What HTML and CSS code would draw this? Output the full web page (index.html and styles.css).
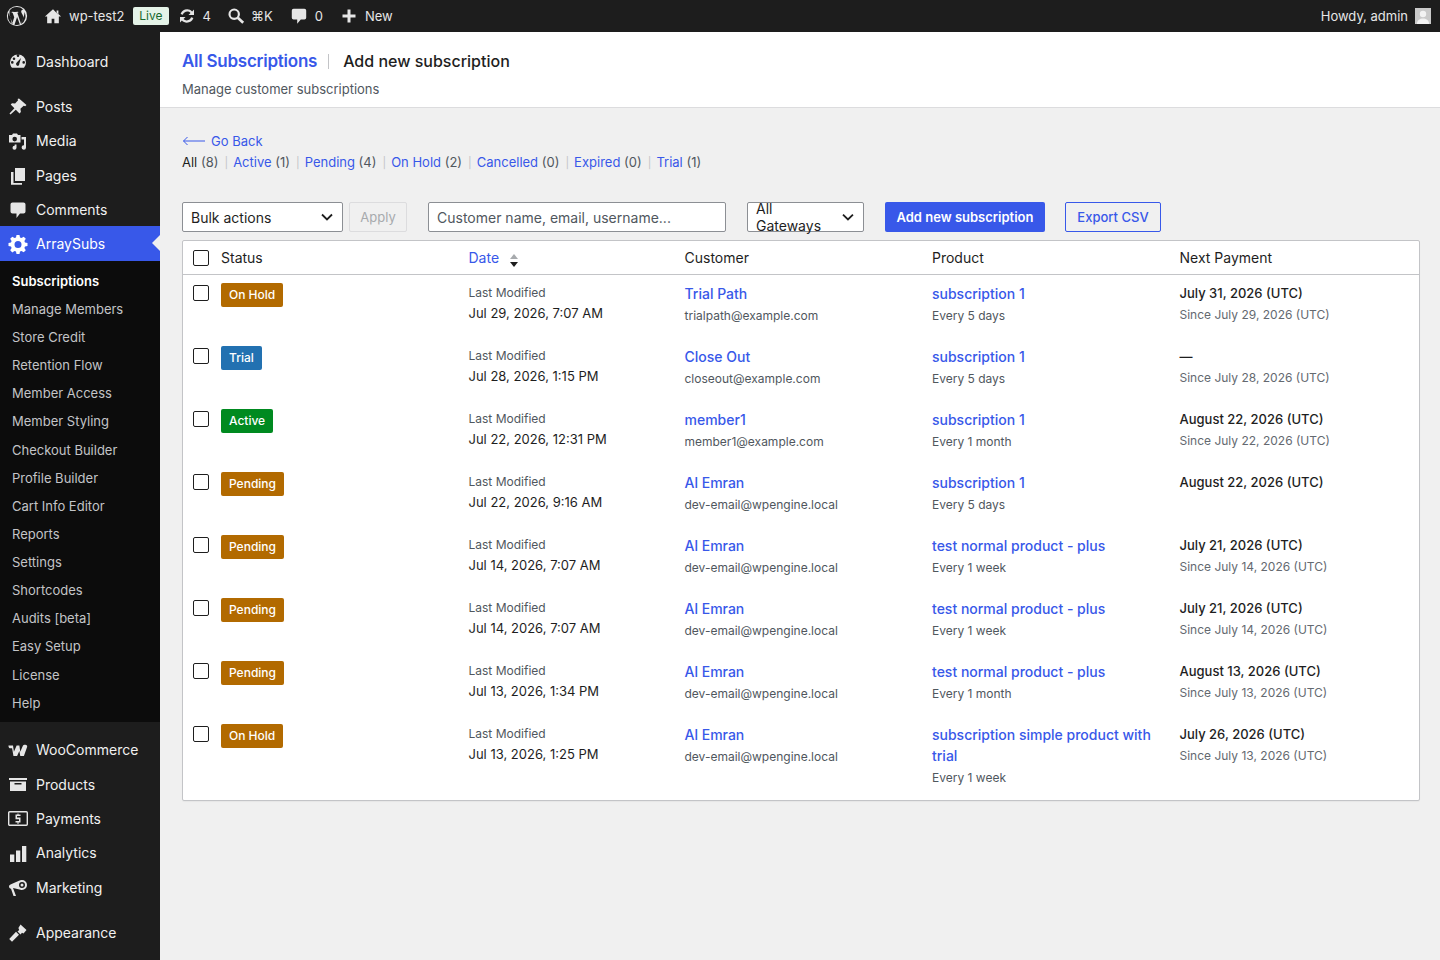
FILE: index.html
```html
<!DOCTYPE html>
<html lang="en">
<head>
<meta charset="utf-8">
<title>All Subscriptions</title>
<link rel="stylesheet" href="styles.css">
</head>
<body>
<header class="adminbar">
  <div class="ab-item ab-wp"><svg class="ab-icon" width="22" height="22" viewBox="0 0 20 20"><path fill="#e6e6e6" d="M10 .8a9.2 9.2 0 1 0 0 18.4A9.2 9.2 0 0 0 10 .8zm0 1a8.2 8.2 0 0 1 5.6 2.2c-1.1 0-1.8.9-1.8 1.9 0 .9.5 1.6 1 2.4.4.7.8 1.500.8 2.800 0 .9-.3 1.900-.8 3.300l-1 3.300-3.500-10.600.6-.1c.5 0 .4-.8-.1-.8l-2.700.1-2.600-.1c-.5 0-.6.8-.1.8l.6.1 1.500 4.100-2.100 6.400L2.900 6.700l.6-.1c.500 0 .4-.8-.1-.8H2.700A8.200 8.200 0 0 1 10 1.800zM1.800 10c0-1 .2-2 .6-3l3.900 10.700A8.200 8.200 0 0 1 1.800 10zm8.300.8 2.500 6.900.1.100a8.200 8.200 0 0 1-5 .1zm6.600-4.400A8.200 8.200 0 0 1 13.600 17.500l2.500-7.200c.5-1.200.6-2.100.6-2.900z"/></svg></div>
  <div class="ab-item ab-site"><svg width="18" height="18" viewBox="0 0 20 20"><path fill="#e6e6e6" d="M16 8.500 10 2.500 1 10.500h2.500V18h5v-5h3v5h5v-7.500H19l-3-2.700V4h-2v2z"/></svg><span>wp-test2</span></div>
  <span class="live">Live</span>
  <div class="ab-item ab-up"><svg width="20" height="20" viewBox="0 0 20 20"><path fill="#e6e6e6" d="M10.200 3.300c1.900 0 3.600.8 4.900 2.100L17 3.500V9h-5.500l2-2c-.9-.9-2-1.400-3.300-1.400-2 0-3.700 1.300-4.300 3.100L3.600 8c.9-2.800 3.500-4.700 6.600-4.700zM3 11h5.500l-2 2c.9.9 2 1.400 3.300 1.400 2 0 3.700-1.300 4.300-3.100l2.300.7c-.9 2.800-3.500 4.700-6.600 4.700-1.900 0-3.600-.8-4.900-2.100L3 16.500z"/></svg><span>4</span></div>
  <div class="ab-item ab-search"><svg width="18" height="18" viewBox="0 0 20 20"><circle cx="8" cy="8" r="5.200" fill="none" stroke="#e6e6e6" stroke-width="2.400"/><path d="M12 12l6 5.500" stroke="#e6e6e6" stroke-width="3" fill="none"/></svg><span>⌘K</span></div>
  <div class="ab-item ab-com"><svg width="18" height="18" viewBox="0 0 20 20"><path fill="#e6e6e6" d="M4 2h12a2 2 0 0 1 2 2v8a2 2 0 0 1-2 2h-4l-4 4.500V14H4a2 2 0 0 1-2-2V4a2 2 0 0 1 2-2z"/></svg><span>0</span></div>
  <div class="ab-item ab-new"><svg width="16" height="16" viewBox="0 0 16 16"><path fill="#e6e6e6" d="M6.500 1.500h3v5h5v3h-5v5h-3v-5h-5v-3h5z"/></svg><span>New</span></div>
  <div class="ab-item ab-howdy"><span>Howdy, admin</span><span class="avatar"><svg width="16" height="16" viewBox="0 0 16 16"><rect width="16" height="16" fill="#c9c9c9"/><circle cx="8" cy="6" r="3.200" fill="#f2f2f2"/><path fill="#f2f2f2" d="M2 16c0-4 3-5.500 6-5.500s6 1.500 6 5.500z"/></svg></span></div>
</header>
<div class="shell">
<nav class="sidebar">
  <ul class="menu menu-a">
    <li class="mi"><svg class="mi-ic" viewBox="0 0 20 20"><path fill="#e6e6e6" d="M10 2.500a8 8 0 0 0-8 8c0 2 .8 3.900 2 5.300h12a8 8 0 0 0 2-5.300 8 8 0 0 0-8-8zM6 5.500a1.300 1.300 0 1 1 0 2.600 1.300 1.300 0 0 1 0-2.600zM9 4.500a1.300 1.300 0 1 1 2 0 1.300 1.300 0 0 1-2 0zm-4.700 7.200a1.300 1.300 0 1 1 0-2.600 1.300 1.300 0 0 1 0 2.600zM10 14a2 2 0 0 1-1-3.700L13 6l-1.700 5.800A2 2 0 0 1 10 14zm5.700-2.300a1.300 1.300 0 1 1 0-2.600 1.300 1.300 0 0 1 0 2.600z"/></svg><span>Dashboard</span></li>
  </ul>
  <ul class="menu menu-b">
    <li class="mi"><svg class="mi-ic" viewBox="0 0 20 20"><path fill="#e6e6e6" d="M11 1.500l7.500 6.500-1.300 1.200-1.500-.5-3.300 3.100.5 3.200-1.400 1.400-3.700-3.700-5.300 4.800-1-1 4.900-5.200-3.700-3.700L4 6.200l3.100.4 3-3.300-.5-1.300z"/></svg><span>Posts</span></li>
    <li class="mi"><svg class="mi-ic" viewBox="0 0 20 20"><path fill="#e6e6e6" d="M1 3h3l1-1.500h4L10 3h2.500v7.500H1zm5.700 1.800a2.300 2.300 0 1 0 0 4.600 2.300 2.300 0 0 0 0-4.600zM13.500 5H18v10.500a2.200 2.200 0 1 1-2-2.200V7.500h-2.500zM8.500 12.500v3.300a2 2 0 1 1-1.800-2v-1.300z"/></svg><span>Media</span></li>
    <li class="mi"><svg class="mi-ic" viewBox="0 0 20 20"><path fill="#e6e6e6" d="M7 2h10v13H7zM3 6h2.500v11H14v1.800H3z"/></svg><span>Pages</span></li>
    <li class="mi"><svg class="mi-ic" viewBox="0 0 20 20"><path fill="#e6e6e6" d="M4.500 2.500h11c1.100 0 2 .9 2 2v7c0 1.100-.9 2-2 2H12l-3.500 4.500v-4.500h-4c-1.100 0-2-.9-2-2v-7c0-1.100.9-2 2-2z"/></svg><span>Comments</span></li>
    <li class="mi mi-cur"><svg class="mi-ic" viewBox="0 0 20 20"><path fill="#fff" fill-rule="evenodd" d="M8.500 1h3l.5 2.500 1.500.6L15.700 2.700l2.100 2.100-1.400 2.200.6 1.500 2.500.5v3l-2.500.5-.6 1.500 1.400 2.200-2.100 2.100-2.200-1.400-1.500.6-.5 2.500h-3L8 17.600l-1.500-.6-2.200 1.400-2.100-2.100 1.400-2.200-.6-1.500L.5 12V9l2.500-.5.6-1.500-1.400-2.200 2.100-2.100 2.200 1.400L8 3.500zM10 7a3.500 3.500 0 1 0 0 7 3.500 3.500 0 0 0 0-7z"/></svg><span>ArraySubs</span></li>
  </ul>
  <ul class="submenu">
    <li class="sub sub-on">Subscriptions</li>
    <li class="sub">Manage Members</li>
    <li class="sub">Store Credit</li>
    <li class="sub">Retention Flow</li>
    <li class="sub">Member Access</li>
    <li class="sub">Member Styling</li>
    <li class="sub">Checkout Builder</li>
    <li class="sub">Profile Builder</li>
    <li class="sub">Cart Info Editor</li>
    <li class="sub">Reports</li>
    <li class="sub">Settings</li>
    <li class="sub">Shortcodes</li>
    <li class="sub">Audits [beta]</li>
    <li class="sub">Easy Setup</li>
    <li class="sub">License</li>
    <li class="sub">Help</li>
  </ul>
  <ul class="menu menu-c">
    <li class="mi"><svg class="mi-ic mi-wide" viewBox="0 0 22 14"><path fill="#e6e6e6" d="M.5 1.500h5l1 7 3-7h3l1 7 2.500-6c.6-1.400 1.600-1.800 3-1.800 1.600 0 2.500 1 2 2.500L17.500 13h-4l-1-5.500-2.500 5.500h-4L4.500 4.500H2C1 4.500.500 3 .5 1.500z"/></svg><span>WooCommerce</span></li>
    <li class="mi"><svg class="mi-ic" viewBox="0 0 20 20"><path fill="#e6e6e6" fill-rule="evenodd" d="M1 3h18v2H1zM2 6.500h16V16H2zM6.500 8v1.500h7V8z"/></svg><span>Products</span></li>
    <li class="mi"><svg class="mi-ic mi-pay" viewBox="0 0 20 15"><rect x=".7" y=".7" width="18.600" height="13.600" rx="1" fill="none" stroke="#e6e6e6" stroke-width="1.400"/><path fill="#e6e6e6" d="M7.500 3.500h5V5H9v1.500h3.500v5h-2V13h-1v-1.500h-2V10H11V8.300H7.500zM9.500 2.500h1v1h-1z"/></svg><span>Payments</span></li>
    <li class="mi"><svg class="mi-ic" viewBox="0 0 20 20"><path fill="#e6e6e6" d="M2 10.500h4.300V18H2zM8 6.500h4.300V18H8zM14 2h4.300v16H14z"/></svg><span>Analytics</span></li>
    <li class="mi"><svg class="mi-ic" viewBox="0 0 20 20"><path fill="#e6e6e6" fill-rule="evenodd" d="M14 2a5 5 0 0 1 0 10c-.5 0-1-.1-1.500-.3L5 10 8 18H5.500L3 10.800C1.800 10.500 1 9.500 1 8.500c0-1 .7-1.900 2-2.300l8-3.400A5 5 0 0 1 14 2zm0 2a3 3 0 0 0 0 6 3 3 0 0 0 0-6zm0 1.500a1.500 1.500 0 1 1 0 3 1.500 1.500 0 0 1 0-3z"/></svg><span>Marketing</span></li>
  </ul>
  <ul class="menu menu-d">
    <li class="mi"><svg class="mi-ic" viewBox="0 0 20 20"><path fill="#e6e6e6" d="M12.500 1.500l6 5.500-3 3.500-1.500-.7-1.500 1.700-3-3 1.700-1.500-.8-2zM8 8.700l3 3-7 7-2.800-2.800z"/></svg><span>Appearance</span></li>
  </ul>
</nav>
<main class="main">
  <div class="pagehead">
    <div class="pagehead-title">
      <a class="pt-link">All Subscriptions</a>
      <span class="pt-sep"></span>
      <span class="pt-add">Add new subscription</span>
    </div>
    <p class="pagehead-sub">Manage customer subscriptions</p>
  </div>
  <div class="content">
    <a class="goback"><svg width="24" height="10" viewBox="0 0 24 10"><path d="M23 5H1.500M5.500 1 1.500 5l4 4" fill="none" stroke="#3858e9" stroke-width="1"/></svg><span>Go Back</span></a>
    <ul class="filters">
      <li class="f-on">All <em>(8)</em></li>
      <li><a>Active</a> <em>(1)</em></li>
      <li><a>Pending</a> <em>(4)</em></li>
      <li><a>On Hold</a> <em>(2)</em></li>
      <li><a>Cancelled</a> <em>(0)</em></li>
      <li><a>Expired</a> <em>(0)</em></li>
      <li><a>Trial</a> <em>(1)</em></li>
    </ul>
    <div class="toolbar">
      <div class="sel sel-bulk"><span>Bulk actions</span><svg width="14" height="14" viewBox="0 0 14 14"><path d="M2 4.500l5 5 5-5" fill="none" stroke="#1e1e1e" stroke-width="1.800"/></svg></div>
      <div class="btn-apply">Apply</div>
      <div class="search">Customer name, email, username...</div>
      <div class="sel sel-gw"><span>All Gateways</span><svg width="14" height="14" viewBox="0 0 14 14"><path d="M2 4.500l5 5 5-5" fill="none" stroke="#1e1e1e" stroke-width="1.800"/></svg></div>
      <div class="btn-primary">Add new subscription</div>
      <div class="btn-outline">Export CSV</div>
    </div>
    <div class="tbl">
      <div class="row row-head">
        <div class="c-check"><span class="cb"></span></div>
        <div>Status</div>
        <div class="th-date"><a>Date</a><svg width="10" height="14" viewBox="0 0 10 14"><path fill="#a7aaad" d="M5 1l4 5H1z"/><path fill="#1e1e1e" d="M5 14l4-5H1z"/></svg></div>
        <div>Customer</div>
        <div>Product</div>
        <div>Next Payment</div>
      </div>
      <div class="row">
        <div class="c-check"><span class="cb"></span></div>
        <div><span class="badge b-hold">On Hold</span></div>
        <div class="c-date"><small>Last Modified</small><p>Jul 29, 2026, 7:07 AM</p></div>
        <div class="c-cust"><a>Trial Path</a><p>trialpath@example.com</p></div>
        <div class="c-prod"><a>subscription 1</a><p>Every 5 days</p></div>
        <div class="c-next"><b>July 31, 2026 (UTC)</b><p>Since July 29, 2026 (UTC)</p></div>
      </div>
      <div class="row">
        <div class="c-check"><span class="cb"></span></div>
        <div><span class="badge b-trial">Trial</span></div>
        <div class="c-date"><small>Last Modified</small><p>Jul 28, 2026, 1:15 PM</p></div>
        <div class="c-cust"><a>Close Out</a><p>closeout@example.com</p></div>
        <div class="c-prod"><a>subscription 1</a><p>Every 5 days</p></div>
        <div class="c-next"><b>—</b><p>Since July 28, 2026 (UTC)</p></div>
      </div>
      <div class="row">
        <div class="c-check"><span class="cb"></span></div>
        <div><span class="badge b-active">Active</span></div>
        <div class="c-date"><small>Last Modified</small><p>Jul 22, 2026, 12:31 PM</p></div>
        <div class="c-cust"><a>member1</a><p>member1@example.com</p></div>
        <div class="c-prod"><a>subscription 1</a><p>Every 1 month</p></div>
        <div class="c-next"><b>August 22, 2026 (UTC)</b><p>Since July 22, 2026 (UTC)</p></div>
      </div>
      <div class="row">
        <div class="c-check"><span class="cb"></span></div>
        <div><span class="badge b-hold">Pending</span></div>
        <div class="c-date"><small>Last Modified</small><p>Jul 22, 2026, 9:16 AM</p></div>
        <div class="c-cust"><a>Al Emran</a><p>dev-email@wpengine.local</p></div>
        <div class="c-prod"><a>subscription 1</a><p>Every 5 days</p></div>
        <div class="c-next"><b>August 22, 2026 (UTC)</b></div>
      </div>
      <div class="row">
        <div class="c-check"><span class="cb"></span></div>
        <div><span class="badge b-hold">Pending</span></div>
        <div class="c-date"><small>Last Modified</small><p>Jul 14, 2026, 7:07 AM</p></div>
        <div class="c-cust"><a>Al Emran</a><p>dev-email@wpengine.local</p></div>
        <div class="c-prod"><a>test normal product - plus</a><p>Every 1 week</p></div>
        <div class="c-next"><b>July 21, 2026 (UTC)</b><p>Since July 14, 2026 (UTC)</p></div>
      </div>
      <div class="row">
        <div class="c-check"><span class="cb"></span></div>
        <div><span class="badge b-hold">Pending</span></div>
        <div class="c-date"><small>Last Modified</small><p>Jul 14, 2026, 7:07 AM</p></div>
        <div class="c-cust"><a>Al Emran</a><p>dev-email@wpengine.local</p></div>
        <div class="c-prod"><a>test normal product - plus</a><p>Every 1 week</p></div>
        <div class="c-next"><b>July 21, 2026 (UTC)</b><p>Since July 14, 2026 (UTC)</p></div>
      </div>
      <div class="row">
        <div class="c-check"><span class="cb"></span></div>
        <div><span class="badge b-hold">Pending</span></div>
        <div class="c-date"><small>Last Modified</small><p>Jul 13, 2026, 1:34 PM</p></div>
        <div class="c-cust"><a>Al Emran</a><p>dev-email@wpengine.local</p></div>
        <div class="c-prod"><a>test normal product - plus</a><p>Every 1 month</p></div>
        <div class="c-next"><b>August 13, 2026 (UTC)</b><p>Since July 13, 2026 (UTC)</p></div>
      </div>
      <div class="row row-last">
        <div class="c-check"><span class="cb"></span></div>
        <div><span class="badge b-hold">On Hold</span></div>
        <div class="c-date"><small>Last Modified</small><p>Jul 13, 2026, 1:25 PM</p></div>
        <div class="c-cust"><a>Al Emran</a><p>dev-email@wpengine.local</p></div>
        <div class="c-prod"><a>subscription simple product with trial</a><p>Every 1 week</p></div>
        <div class="c-next"><b>July 26, 2026 (UTC)</b><p>Since July 13, 2026 (UTC)</p></div>
      </div>
    </div>
  </div>
</main>
</div>
</body>
</html>
```

FILE: styles.css
```css
* { box-sizing: border-box; }
html, body { margin: 0; padding: 0; height: 960px; overflow: hidden; }
body { font-family: Inter, "Liberation Sans", sans-serif; font-size: 14px; color: #1e1e1e; background: #f0f0f0; }
ul { list-style: none; margin: 0; padding: 0; }
p { margin: 0; }
a { color: #3858e9; }

.adminbar { height: 32px; background: #1d1d1d; color: #e6e6e6; display: flex; align-items: center; font-size: 13px; }
.ab-item { display: flex; align-items: center; gap: 6px; }
.ab-wp { margin-left: 6px; }
.ab-site { margin-left: 16px; gap: 7px; }
.live { margin-left: 9px; background: #e5f3e8; color: #17692e; font-size: 12px; line-height: 18px; height: 18px; padding: 0 6px; border-radius: 2px; }
.ab-up { margin-left: 8px; gap: 6px; }
.ab-search { margin-left: 16px; gap: 6px; }
.ab-com { margin-left: 17px; gap: 7px; }
.ab-new { margin-left: 18px; gap: 8px; }
.ab-howdy { margin-left: auto; margin-right: 9px; gap: 7px; }
.avatar { display: block; width: 16px; height: 16px; }
.avatar svg { display: block; }

.shell { display: flex; height: 928px; }
.sidebar { width: 160px; flex: none; background: #1d1d1d; color: #f0f0f0; overflow: hidden; }
.menu-a { padding-top: 12px; }
.menu-b { padding-top: 11px; }
.menu-c { padding-top: 11px; }
.menu-d { padding-top: 11px; }
.mi { position: relative; height: 34.3px; display: flex; align-items: center; padding-left: 36px; font-size: 14px; }
.mi-ic { position: absolute; left: 8px; top: 8px; width: 20px; height: 20px; }
.mi-wide { width: 20px; height: 13px; top: 11px; }
.mi-pay { height: 15px; top: 10px; }
.mi-cur { background: #3858e9; color: #fff; }
.mi-cur::after { content: ""; position: absolute; right: 0; top: 9px; border: 8px solid transparent; border-right-color: #f0f0f0; border-left-width: 0; }
.submenu { background: #0c0c0c; padding: 6px 0 5px; }
.sub { height: 28.13px; padding-left: 12px; font-size: 13px; line-height: 28px; color: #c3c4c7; }
.sub-on { color: #fff; font-weight: 600; }

.main { flex: 1; min-width: 0; }
.pagehead { background: #fff; height: 76px; border-bottom: 1px solid #dcdcde; padding: 18px 22px 0; }
.pagehead-title { display: flex; align-items: center; height: 22px; }
.pt-link { color: #3858e9; font-size: 17px; font-weight: 600; letter-spacing: -.25px; }
.pt-sep { width: 1px; height: 15px; background: #c3c4c7; margin: 0 14px 0 11px; }
.pt-add { font-size: 16px; font-weight: 500; }
.pagehead-sub { margin-top: 8px; font-size: 13px; line-height: 18px; color: #50575e; }

.content { padding: 24px 20px 0 22px; }
.goback { display: flex; align-items: center; gap: 5px; height: 18px; font-size: 13px; }
.filters { display: flex; margin-top: 3px; height: 18px; font-size: 13px; line-height: 18px; color: #50575e; }
.filters li + li { margin-left: 5px; }
.filters li:not(:last-child)::after { content: "|"; margin-left: 6px; color: #c3c4c7; font-size: 11px; }
.filters em { font-style: normal; }
.f-on { color: #1e1e1e; }
.f-on em { color: #50575e; }

.toolbar { display: flex; align-items: center; margin-top: 31px; height: 30px; font-size: 14px; }
.sel { height: 30px; background: #fff; border: 1px solid #8c8f94; border-radius: 2px; display: flex; align-items: center; justify-content: space-between; }
.sel-bulk { width: 161px; padding: 0 8px; }
.sel-gw { width: 117px; padding: 0 8px; margin-left: 21px; }
.btn-apply { width: 58px; height: 30px; margin-left: 6px; border: 1px solid #dcdcde; border-radius: 2px; color: #a7aaad; text-align: center; line-height: 29px; font-size: 13px; }
.search { width: 298px; height: 30px; margin-left: 21px; background: #fff; border: 1px solid #8c8f94; border-radius: 2px; padding: 0 8px; line-height: 29px; color: #50575e; }
.btn-primary { width: 160px; height: 30px; margin-left: 21px; background: #3858e9; color: #fff; border-radius: 2px; text-align: center; line-height: 30px; font-size: 13px; font-weight: 600; }
.btn-outline { width: 96px; height: 30px; margin-left: 20px; border: 1px solid #3858e9; border-radius: 2px; color: #3858e9; text-align: center; line-height: 28px; font-size: 13px; font-weight: 500; }

.tbl { margin-top: 8px; width: 1238px; background: #fff; border: 1px solid #c3c4c7; border-radius: 2px; box-shadow: 0 1px 1px rgba(0,0,0,.04); }
.row { display: grid; grid-template-columns: 38px 247.500px 216px 247.500px 247.500px 1fr; height: 63px; padding-top: 8px; line-height: 20px; }
.row-head { height: 34px; padding-top: 7px; border-bottom: 1px solid #c3c4c7; }
.row-last { height: 84px; }
.c-check { padding-left: 10px; }
.cb { display: block; width: 16px; height: 16px; background: #fff; border: 1px solid #1e1e1e; border-radius: 2px; margin-top: 2px; }
.th-date { display: flex; align-items: flex-start; gap: 10px; }
.th-date svg { margin-top: 5px; }
.badge { display: inline-block; height: 24px; line-height: 24px; padding: 0 8px; border-radius: 2px; color: #fff; font-size: 12px; font-weight: 500; }
.b-hold { background: #b26a00; }
.b-trial { background: #2271b1; }
.b-active { background: #008a20; }
.c-date small { display: block; font-size: 12px; line-height: 20px; color: #50575e; }
.c-date p { font-size: 13px; line-height: 20px; margin-top: 0; }
.c-cust a, .c-prod a { display: block; font-size: 14px; font-weight: 500; line-height: 21px; }
.c-cust p, .c-prod p { font-size: 12px; line-height: 21px; color: #50575e; margin-top: 1px; }
.c-next b { display: block; font-size: 13px; font-weight: 500; line-height: 20px; }
.c-next p { font-size: 12px; line-height: 20px; color: #646970; margin-top: 2px; }
```
